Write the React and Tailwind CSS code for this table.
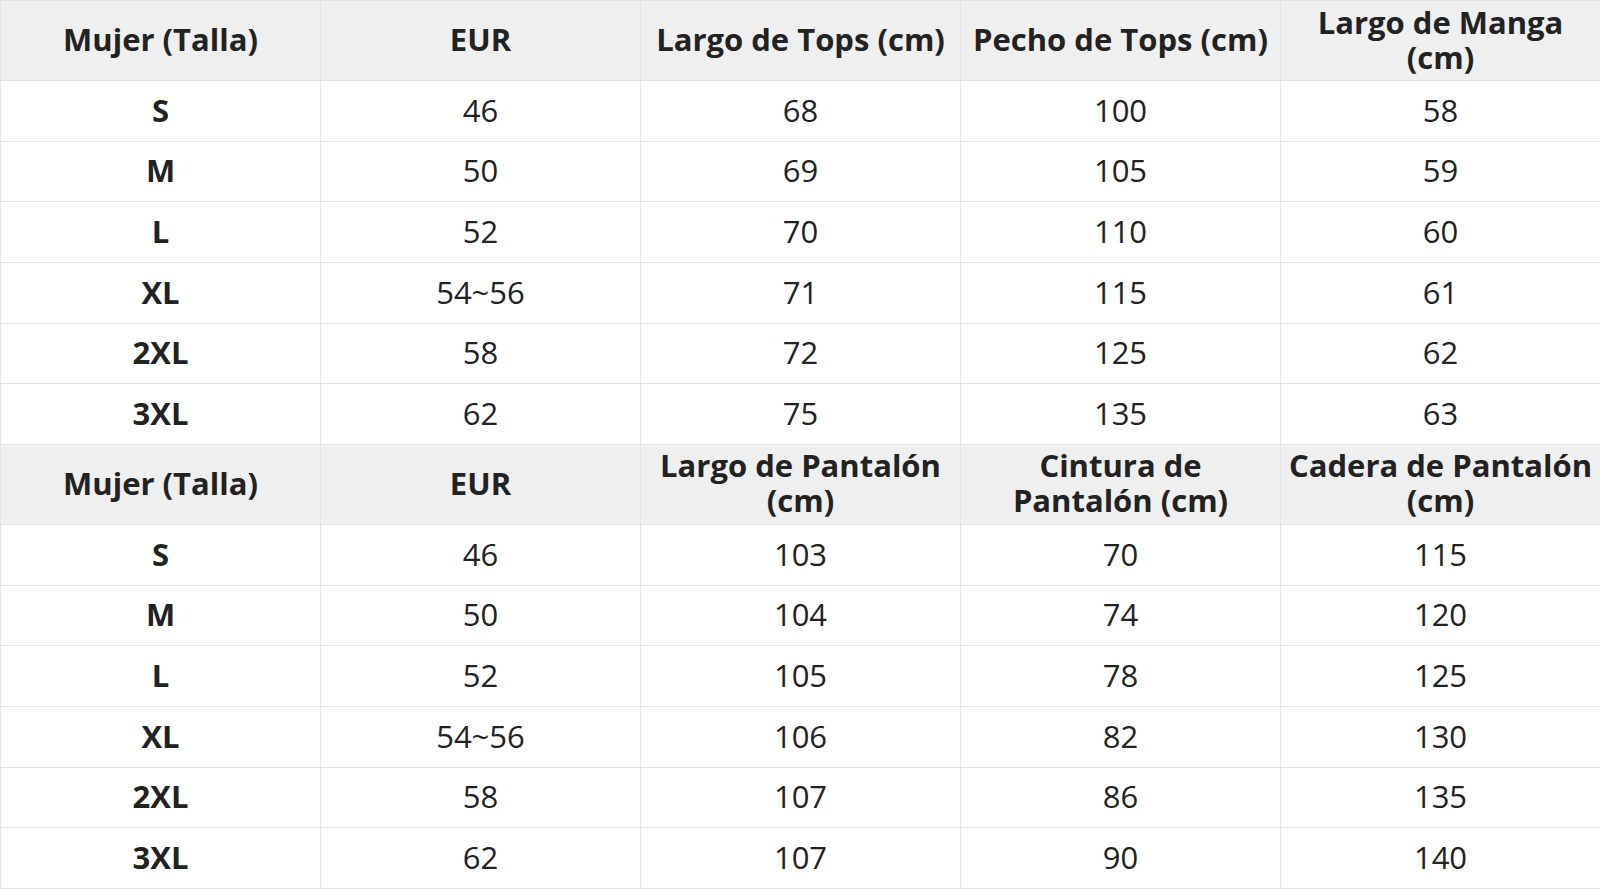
const top = {
  head: ["Mujer (Talla)", "EUR", "Largo de Tops (cm)", "Pecho de Tops (cm)", "Largo de Manga (cm)"],
  rows: [
    ["S", "46", "68", "100", "58"],
    ["M", "50", "69", "105", "59"],
    ["L", "52", "70", "110", "60"],
    ["XL", "54~56", "71", "115", "61"],
    ["2XL", "58", "72", "125", "62"],
    ["3XL", "62", "75", "135", "63"],
  ],
};
const bottom = {
  head: ["Mujer (Talla)", "EUR", "Largo de Pantalón (cm)", "Cintura de Pantalón (cm)", "Cadera de Pantalón (cm)"],
  rows: [
    ["S", "46", "103", "70", "115"],
    ["M", "50", "104", "74", "120"],
    ["L", "52", "105", "78", "125"],
    ["XL", "54~56", "106", "82", "130"],
    ["2XL", "58", "107", "86", "135"],
    ["3XL", "62", "107", "90", "140"],
  ],
};

function Section({ data }) {
  return (
    <>
      {data.head.map((h, i) => (
        <div
          key={"h" + i}
          className="flex items-center justify-center text-center px-[6px] pb-[2px] bg-[#efefef] border-r border-b border-[#e3e3e3] font-bold text-[31px] leading-[35px]"
        >
          {h}
        </div>
      ))}
      {data.rows.map((r, ri) =>
        r.map((c, ci) => (
          <div
            key={ri + "-" + ci}
            className={
              "flex items-center justify-center text-center pb-[2px] border-r border-b border-[#e3e3e3] text-[31px] leading-[34px] " +
              (ci === 0 ? "font-bold" : "font-normal")
            }
          >
            {c}
          </div>
        ))
      )}
    </>
  );
}

export default function App() {
  return (
    <div className="w-[1600px] h-[889px] overflow-hidden bg-white text-[#222222] font-['Open_Sans',sans-serif]">
      <div className="grid grid-cols-5 grid-rows-[80px_repeat(6,60.67px)_80px_repeat(6,60.67px)] border-t border-l border-[#e3e3e3] w-[1601px]">
        <Section data={top} />
        <Section data={bottom} />
      </div>
    </div>
  );
}
